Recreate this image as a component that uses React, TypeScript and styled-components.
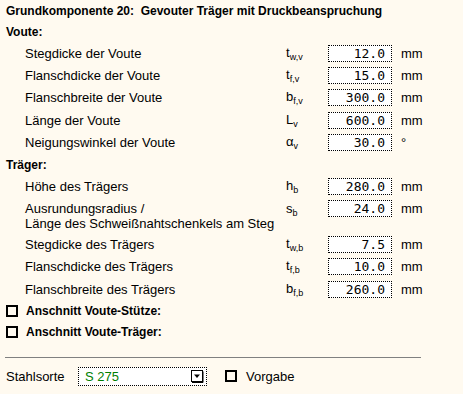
import React from 'react'
import styled, { createGlobalStyle } from 'styled-components'

const GlobalStyle = createGlobalStyle`
  html, body {
    margin: 0;
    padding: 0;
    background: #fffaf0;
  }
  body {
    font-family: "Liberation Sans", Arial, sans-serif;
    font-size: 13px;
    color: #000;
  }
`

const Page = styled.div`
  width: 463px;
  height: 394px;
  padding-left: 6px;
  box-sizing: border-box;
  display: flex;
  flex-direction: column;
`

const Title = styled.div`
  height: 22px;
  display: flex;
  align-items: center;
  font-weight: bold;
  font-size: 12px;
  white-space: pre;
`

const SectionHead = styled.div<{ $h: number }>`
  height: ${p => p.$h}px;
  display: flex;
  align-items: center;
  font-weight: bold;
  font-size: 12px;
`

const FieldRow = styled.div<{ $tall?: boolean }>`
  display: grid;
  grid-template-columns: 261px 42px 64px auto;
  align-items: ${p => (p.$tall ? 'start' : 'center')};
  height: ${p => (p.$tall ? 35.25 : 22.5)}px;
  padding-left: 19px;
`

const Label = styled.div<{ $tall?: boolean }>`
  white-space: nowrap;
  line-height: 15px;
  padding-top: ${p => (p.$tall ? 3 : 0)}px;
`

const Symbol = styled.div<{ $tall?: boolean }>`
  font-size: 13px;
  margin-top: ${p => (p.$tall ? 3 : 0)}px;
  sub {
    font-size: 9px;
    vertical-align: -3px;
  }
`

const ValueBox = styled.div<{ $tall?: boolean }>`
  height: 17px;
  box-sizing: border-box;
  border: 1px dotted #000;
  background: #fff;
  text-align: right;
  padding-right: 6px;
  font-family: "DejaVu Sans Mono", "Liberation Mono", monospace;
  font-size: 13px;
  line-height: 15px;
  margin-top: ${p => (p.$tall ? 2 : 0)}px;
`

const Unit = styled.div<{ $tall?: boolean }>`
  padding-left: 9px;
  margin-top: ${p => (p.$tall ? 3 : 0)}px;
`

const CheckRow = styled.div`
  height: 21px;
  display: flex;
  align-items: center;
  gap: 8px;
  font-weight: bold;
  font-size: 12px;
`

const Box = styled.span`
  width: 12px;
  height: 12px;
  box-sizing: border-box;
  border: 2px solid #000;
  flex: none;
`

const Separator = styled.div`
  margin-top: 15px;
  width: 416px;
  margin-left: -1px;
  height: 1px;
  background: #808080;
`

const BottomRow = styled.div`
  height: 36px;
  display: flex;
  align-items: center;
`

const BottomLabel = styled.span`
  width: 72px;
`

const Select = styled.div`
  width: 129px;
  height: 19px;
  box-sizing: border-box;
  border: 1px dotted #000;
  background: #fff;
  display: flex;
  align-items: center;
  justify-content: space-between;
  padding: 0 2px 0 6px;
  color: #008000;
`

const Arrow = styled.svg`
  display: block;
`

const Preset = styled.label`
  margin-left: 18px;
  display: flex;
  align-items: center;
  gap: 9px;
`

type Field = { label: React.ReactNode; sym: string; sub: string; value: string; unit: string; tall?: boolean }

const voute: Field[] = [
  { label: 'Stegdicke der Voute', sym: 't', sub: 'w,v', value: '12.0', unit: 'mm' },
  { label: 'Flanschdicke der Voute', sym: 't', sub: 'f,v', value: '15.0', unit: 'mm' },
  { label: 'Flanschbreite der Voute', sym: 'b', sub: 'f,v', value: '300.0', unit: 'mm' },
  { label: 'Länge der Voute', sym: 'L', sub: 'v', value: '600.0', unit: 'mm' },
  { label: 'Neigungswinkel der Voute', sym: 'α', sub: 'v', value: '30.0', unit: '°' },
]

const traeger: Field[] = [
  { label: 'Höhe des Trägers', sym: 'h', sub: 'b', value: '280.0', unit: 'mm' },
  {
    label: (
      <>
        Ausrundungsradius /<br />
        Länge des Schweißnahtschenkels am Steg
      </>
    ),
    sym: 's',
    sub: 'b',
    value: '24.0',
    unit: 'mm',
    tall: true,
  },
  { label: 'Stegdicke des Trägers', sym: 't', sub: 'w,b', value: '7.5', unit: 'mm' },
  { label: 'Flanschdicke des Trägers', sym: 't', sub: 'f,b', value: '10.0', unit: 'mm' },
  { label: 'Flanschbreite des Trägers', sym: 'b', sub: 'f,b', value: '260.0', unit: 'mm' },
]

function Row({ f }: { f: Field }) {
  return (
    <FieldRow $tall={f.tall}>
      <Label $tall={f.tall}>{f.label}</Label>
      <Symbol $tall={f.tall}>
        {f.sym}
        <sub>{f.sub}</sub>
      </Symbol>
      <ValueBox $tall={f.tall}>{f.value}</ValueBox>
      <Unit $tall={f.tall}>{f.unit}</Unit>
    </FieldRow>
  )
}

export default function App() {
  return (
    <Page>
      <GlobalStyle />
      <Title>Grundkomponente 20:  Gevouter Träger mit Druckbeanspruchung</Title>
      <SectionHead $h={20}>Voute:</SectionHead>
      {voute.map((f, i) => (
        <Row key={i} f={f} />
      ))}
      <SectionHead $h={21.5}>Träger:</SectionHead>
      {traeger.map((f, i) => (
        <Row key={i} f={f} />
      ))}
      <CheckRow>
        <Box />
        Anschnitt Voute-Stütze:
      </CheckRow>
      <CheckRow>
        <Box />
        Anschnitt Voute-Träger:
      </CheckRow>
      <Separator />
      <BottomRow>
        <BottomLabel>Stahlsorte</BottomLabel>
        <Select>
          <span>S 275</span>
          <Arrow width="13" height="13" viewBox="0 0 13 13">
            <rect x="0.5" y="0.5" width="11" height="11" fill="#fff" stroke="#000" />
            <path d="M12 1.5v11h-11" fill="none" stroke="#000" />
            <path d="M3 4.5h6l-3 3.5z" fill="#000" />
          </Arrow>
        </Select>
        <Preset>
          <Box />
          Vorgabe
        </Preset>
      </BottomRow>
    </Page>
  )
}
